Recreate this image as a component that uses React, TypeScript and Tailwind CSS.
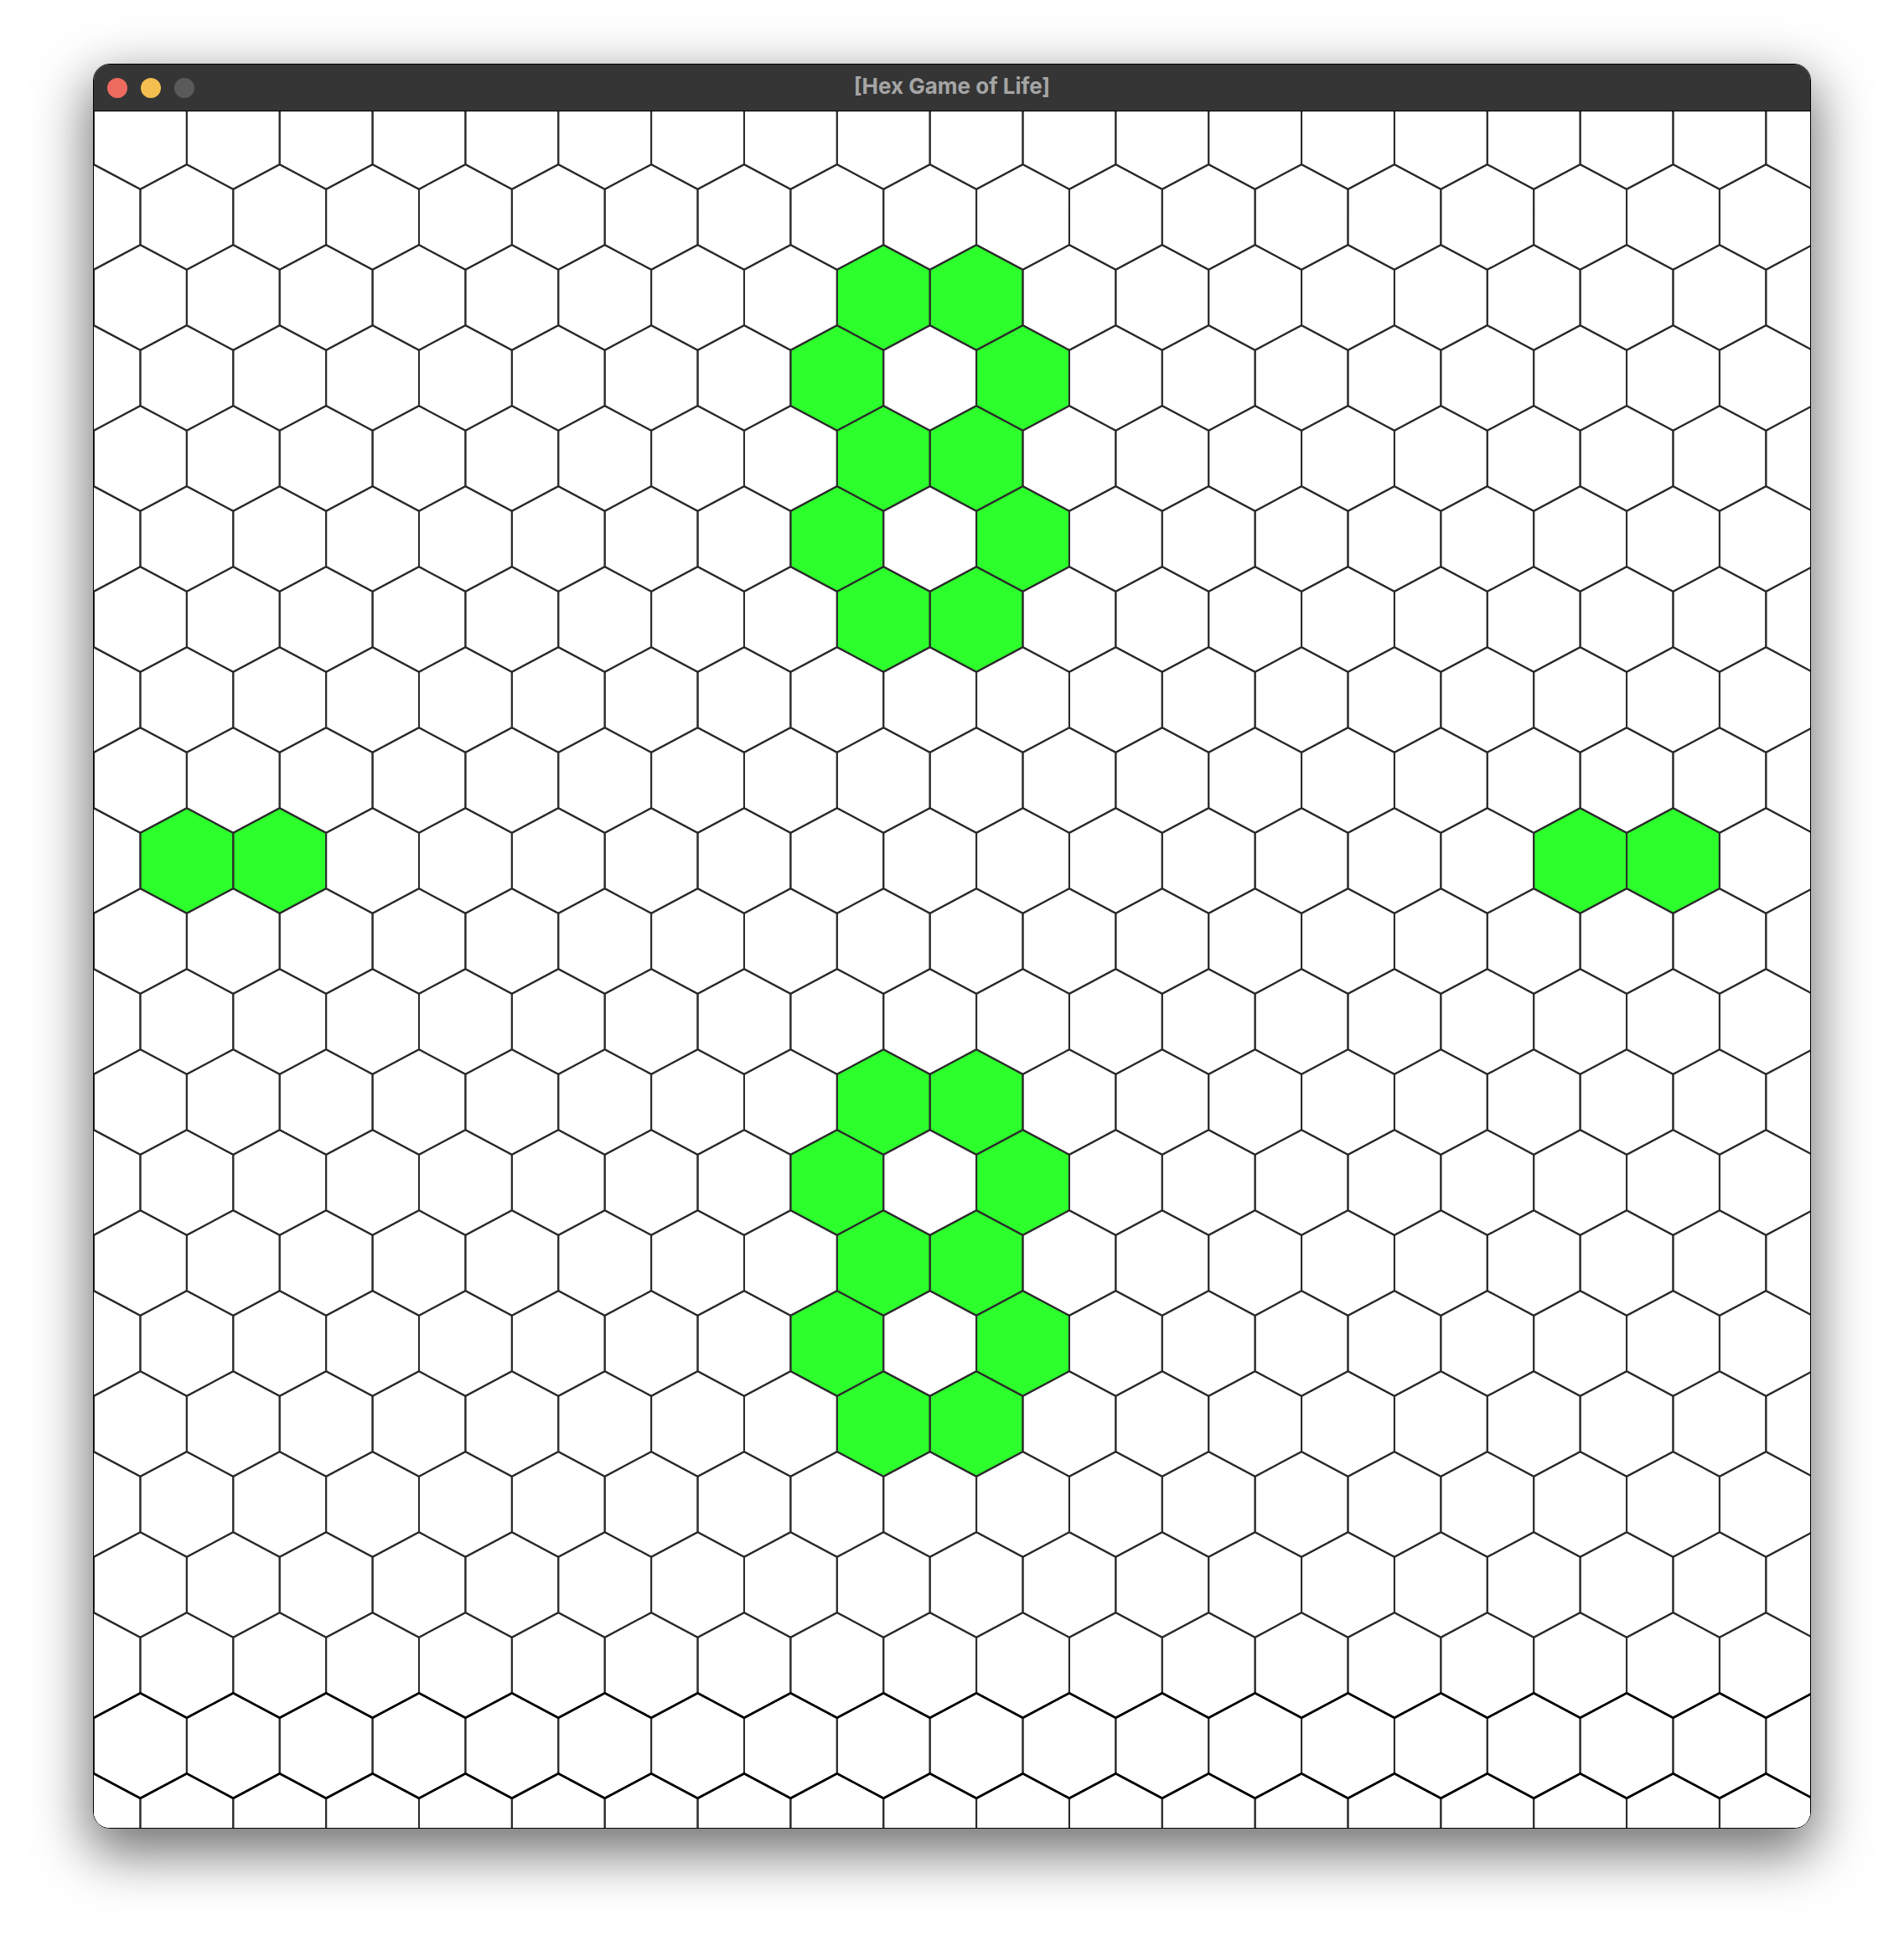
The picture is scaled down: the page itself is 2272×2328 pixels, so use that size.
import React from "react";

const W = 64 * Math.sqrt(3); // column spacing
const DY = 96; // row spacing
const A = 33.25; // half vertical side
const H2 = 62.75; // half height
const ROW0 = 30;
const ROWS = 22;
const COLS = 20;

const alive = new Set<string>([
  "2,8", "2,9", "3,8", "3,10", "4,8", "4,9", "5,8", "5,10", "6,8", "6,9",
  "9,1", "9,2", "9,16", "9,17",
  "12,8", "12,9", "13,8", "13,10", "14,8", "14,9", "15,8", "15,10", "16,8", "16,9",
]);

type Cell = { r: number; c: number; cx: number; cy: number; pts: string; top: string };

function buildCells(): Cell[] {
  const cells: Cell[] = [];
  for (let r = 0; r < ROWS; r++) {
    const cy = ROW0 + DY * r;
    for (let c = -1; c < COLS; c++) {
      const cx = (r % 2 === 0 ? W / 2 : 0) + W * c;
      const hw = W / 2;
      const p = [
        [cx, cy - H2],
        [cx + hw, cy - A],
        [cx + hw, cy + A],
        [cx, cy + H2],
        [cx - hw, cy + A],
        [cx - hw, cy - A],
      ];
      const pts = p.map(([x, y]) => `${x.toFixed(2)},${y.toFixed(2)}`).join(" ");
      const top = [p[5], p[0], p[1]].map(([x, y]) => `${x.toFixed(2)},${y.toFixed(2)}`).join(" ");
      cells.push({ r, c, cx, cy, pts, top });
    }
  }
  return cells;
}

function HexGrid() {
  const cells = buildCells();
  return (
    <svg width={2048} height={2048} viewBox="0 0 2048 2048" className="block">
      <rect x={0} y={0} width={2048} height={2048} fill="#ffffff" />
      {cells.map((cell) =>
        alive.has(`${cell.r},${cell.c}`) ? (
          <polygon key={`f${cell.r}-${cell.c}`} points={cell.pts} fill="#2cff2c" />
        ) : null
      )}
      {cells.map((cell) => (
        <polygon
          key={`s${cell.r}-${cell.c}`}
          points={cell.pts}
          fill="none"
          stroke="#2b2b2b"
          strokeWidth={2}
          strokeLinejoin="miter"
        />
      ))}
      {cells
        .filter((cell) => cell.r >= 20)
        .map((cell) => (
          <polyline
            key={`t${cell.r}-${cell.c}`}
            points={cell.top}
            fill="none"
            stroke="#000000"
            strokeWidth={2.6}
          />
        ))}
    </svg>
  );
}

export default function App() {
  return (
    <div className="w-[2272px] h-[2328px] bg-white pt-[76px] pl-[111px]">
      <div className="w-[2050px] flex flex-col rounded-[20px] border border-black overflow-hidden shadow-[0_24px_64px_6px_rgba(0,0,0,0.55)]">
        <div className="h-[56px] bg-[#353535] border-b border-black grid grid-cols-[1fr_auto_1fr] items-center">
          <div className="flex items-center gap-[16px] pl-[16px]">
            <span className="w-[24px] h-[24px] rounded-full bg-[#ec6a5e]" />
            <span className="w-[24px] h-[24px] rounded-full bg-[#f4bf4f]" />
            <span className="w-[24px] h-[24px] rounded-full bg-[#5a5a5a]" />
          </div>
          <div
            className="text-[26px] font-bold text-[#a5a5a5] leading-none mb-[3px]"
            style={{ fontFamily: "Inter, 'Liberation Sans', sans-serif" }}
          >
            [Hex Game of Life]
          </div>
          <div />
        </div>
        <div className="w-[2048px] h-[2048px] bg-white">
          <HexGrid />
        </div>
      </div>
    </div>
  );
}
